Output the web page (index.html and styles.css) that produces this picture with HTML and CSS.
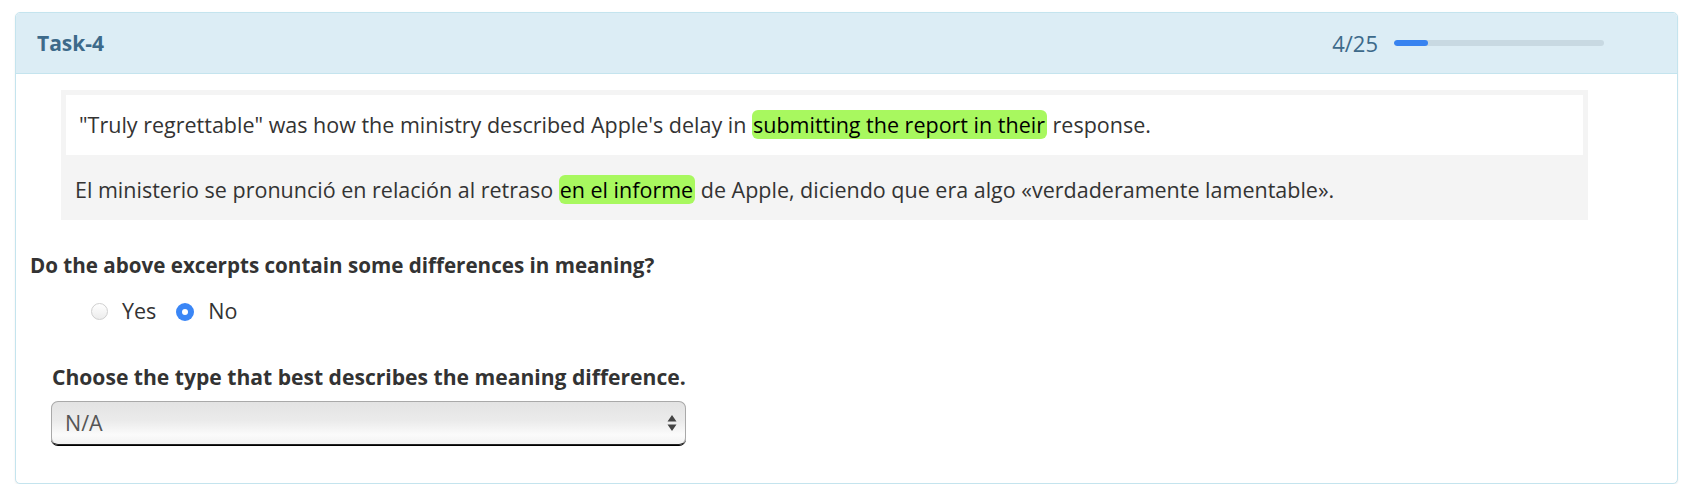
FILE: index.html
```html
<!DOCTYPE html>
<html lang="en">
<head>
<meta charset="utf-8">
<title>Task-4</title>
<link rel="stylesheet" href="styles.css">
</head>
<body>
<div class="panel">
  <div class="panel-head">
    <div class="task-title">Task-4</div>
    <div class="progress">
      <span class="progress-count">4/25</span>
      <div class="progress-track"><div class="progress-fill" style="width: 16%"></div></div>
    </div>
  </div>
  <div class="panel-body">
    <div class="excerpts">
      <div class="excerpt source">"Truly regrettable" was how the ministry described Apple's delay in <span class="hl">submitting the report in their</span> response.</div>
      <div class="excerpt target">El ministerio se pronunció en relación al retraso <span class="hl">en el informe</span> de Apple, diciendo que era algo «verdaderamente lamentable».</div>
    </div>
    <div class="question">Do the above excerpts contain some differences in meaning?</div>
    <div class="options">
      <label class="opt"><span class="radio"></span>Yes</label>
      <label class="opt"><span class="radio checked"></span>No</label>
    </div>
    <div class="type-block">
      <div class="type-label">Choose the type that best describes the meaning difference.</div>
      <div class="select">
        <span class="select-value">N/A</span>
        <svg class="select-arrows" width="10" height="18" viewBox="0 0 10 18"><path d="M5 1 L9.5 7.5 L0.5 7.5 Z M5 17 L9.5 10.5 L0.5 10.5 Z" fill="#444"/></svg>
      </div>
    </div>
  </div>
</div>
</body>
</html>
```
FILE: styles.css
```css
html, body { background: #fff; }
body {
  margin: 0;
  padding: 12px 10px 0 15px;
  font-family: "Open Sans", "Noto Sans", sans-serif;
  color: #333;
}
.panel {
  border: 1px solid #c4e4ee;
  border-radius: 5px;
  background: #fff;
  box-shadow: 0 1px 2px rgba(0, 0, 0, 0.08);
  overflow: hidden;
}
.panel-head {
  height: 60px;
  background: #dcedf5;
  border-bottom: 1px solid #c4e4ee;
  display: flex;
  align-items: center;
  justify-content: space-between;
  padding: 0 73px 0 21px;
}
.task-title {
  font-size: 21px;
  font-weight: bold;
  color: #3d6a8a;
  line-height: 60px;
}
.progress {
  display: flex;
  align-items: center;
  gap: 16px;
}
.progress-count {
  font-size: 22px;
  color: #3d6a8a;
  line-height: 60px;
}
.progress-track {
  width: 210px;
  height: 6px;
  border-radius: 3px;
  background: #c8d9e2;
  overflow: hidden;
}
.progress-fill {
  height: 100%;
  background: #3883f0;
  border-radius: 3px;
}
.panel-body {
  padding: 16px 14px 38px 14px;
}
.excerpts {
  margin: 0 75px 0 31px;
  background: #f4f4f4;
  padding: 5px 5px 0 5px;
  font-size: 21.5px;
}
.excerpt {
  line-height: 60px;
  height: 60px;
  white-space: nowrap;
}
.source {
  background: #fff;
  padding-left: 13px;
}
.target {
  margin-top: 5px;
  padding-left: 9px;
}
.hl {
  background: #a8f85f;
  color: #000;
  border-radius: 6px;
  padding: 0 2px 0 1px;
}
.question {
  margin-top: 30px;
  font-size: 20.6px;
  font-weight: bold;
  line-height: 30px;
  color: #333;
}
.options {
  margin-top: 16px;
  margin-left: 61px;
  display: flex;
  align-items: center;
  height: 30px;
  font-size: 21.5px;
  line-height: 30px;
}
.opt {
  display: flex;
  align-items: center;
  margin-right: 20px;
}
.radio {
  width: 17px;
  height: 17px;
  box-sizing: border-box;
  border-radius: 50%;
  border: 1px solid #cfcfcf;
  background: linear-gradient(#ffffff, #ececec);
  margin-right: 14px;
  margin-top: 1px;
  display: flex;
  align-items: center;
  justify-content: center;
}
.radio.checked {
  width: 18px;
  height: 18px;
  border: none;
  background: #3a86f6;
}
.radio.checked::after {
  content: "";
  width: 6px;
  height: 6px;
  border-radius: 50%;
  background: #fff;
}
.type-block {
  margin-top: 36px;
  margin-left: 22px;
}
.type-label {
  font-size: 21.1px;
  font-weight: bold;
  line-height: 30px;
  color: #333;
}
.select {
  margin-top: 9px;
  margin-left: -1px;
  width: 635px;
  height: 44px;
  box-sizing: border-box;
  border: 1px solid #a9a9a9;
  border-bottom: 1px solid #222;
  border-radius: 7px;
  box-shadow: 0 1px 0 #000;
  background: linear-gradient(to bottom, #e3e3e3 0%, #ebebeb 45%, #fbfbfb 78%, #f2f2f2 100%);
  display: flex;
  align-items: center;
  justify-content: space-between;
  padding: 0 8px 0 13px;
}
.select-value {
  font-size: 21.5px;
  color: #555;
  line-height: 30px;
}
.select-arrows {
  display: block;
}
```
